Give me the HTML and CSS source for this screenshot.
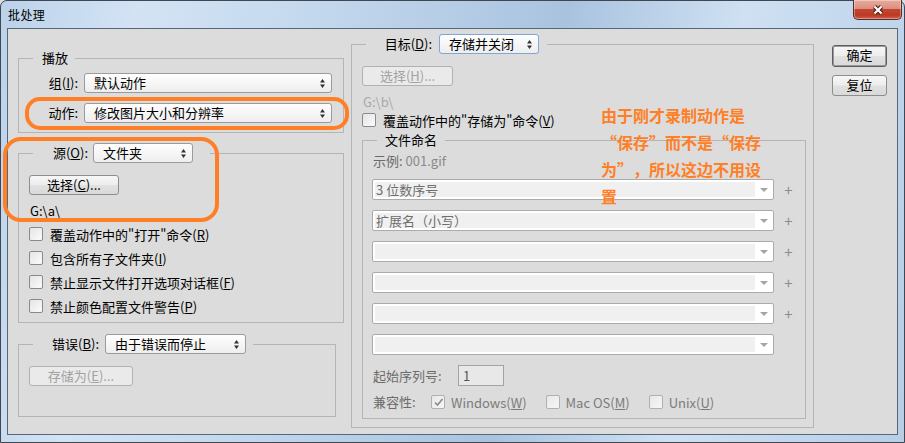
FILE: index.html
```html
<!DOCTYPE html>
<html lang="zh-CN">
<head>
    <meta charset="UTF-8">
    <title>批处理</title>
    <link rel="stylesheet" href="styles.css">
</head>
<body>
<div class="window">
    <div class="titlebar">
        <span class="title">批处理</span>
        <div class="close">
            <svg width="14" height="12" viewBox="0 0 14 12">
                <path d="M3.5 2.5L10.5 9.5M10.5 2.5L3.5 9.5" stroke="#4a1d18" stroke-width="4.4"/>
                <path d="M3.5 2.5L10.5 9.5M10.5 2.5L3.5 9.5" stroke="#fff" stroke-width="2.2"/>
            </svg>
        </div>
    </div>
    <div class="frame">
        <div class="client">
            <div class="left">
                <fieldset class="group play">
                    <legend class="lg-play">播放</legend>
                    <div class="body">
                        <div class="row">
                            <span class="lbl w59">组(<u>I</u>):</span>
                            <div class="select w248">默认动作<svg class="spin" width="5" height="9" viewBox="0 0 5 9"><path d="M2.5 0L5 3.5H0zM2.5 9L0 5.5H5z"/></svg></div>
                        </div>
                        <div class="row">
                            <span class="lbl w59">动作:</span>
                            <div class="select w248">修改图片大小和分辨率<svg class="spin" width="5" height="9" viewBox="0 0 5 9"><path d="M2.5 0L5 3.5H0zM2.5 9L0 5.5H5z"/></svg></div>
                        </div>
                    </div>
                </fieldset>

                <fieldset class="group source">
                    <legend class="lg-source">
                        <span class="lbl w51">源(<u>O</u>):</span>
                        <div class="select w100">文件夹<svg class="spin" width="5" height="9" viewBox="0 0 5 9"><path d="M2.5 0L5 3.5H0zM2.5 9L0 5.5H5z"/></svg></div>
                    </legend>
                    <div class="body">
                        <div class="btn w90">选择(<u>C</u>)...</div>
                        <div class="path">G:\a\</div>
                        <div class="checks">
                            <div class="check"><span class="cb"></span>覆盖动作中的"打开"命令(<u>R</u>)</div>
                            <div class="check"><span class="cb"></span>包含所有子文件夹(<u>I</u>)</div>
                            <div class="check"><span class="cb"></span>禁止显示文件打开选项对话框(<u>F</u>)</div>
                            <div class="check"><span class="cb"></span>禁止颜色配置文件警告(<u>P</u>)</div>
                        </div>
                    </div>
                </fieldset>

                <fieldset class="group errors">
                    <legend class="lg-errors">
                        <span class="lbl w62">错误(<u>B</u>):</span>
                        <div class="select w141">由于错误而停止<svg class="spin" width="5" height="9" viewBox="0 0 5 9"><path d="M2.5 0L5 3.5H0zM2.5 9L0 5.5H5z"/></svg></div>
                    </legend>
                    <div class="body">
                        <div class="btn disabled w104">存储为(<u>E</u>)...</div>
                    </div>
                </fieldset>
            </div>

            <fieldset class="group target">
                <legend class="lg-target">
                    <span class="lbl w62">目标(<u>D</u>):</span>
                    <div class="select w100 focus">存储并关闭<svg class="spin" width="5" height="9" viewBox="0 0 5 9"><path d="M2.5 0L5 3.5H0zM2.5 9L0 5.5H5z"/></svg></div>
                </legend>
                <div class="body">
                    <div class="btn disabled w91">选择(<u>H</u>)...</div>
                    <div class="path disabled-text">G:\b\</div>
                    <div class="check tall"><span class="cb"></span>覆盖动作中的"存储为"命令(<u>V</u>)</div>

                    <fieldset class="group naming">
                        <legend class="lg-naming">文件命名</legend>
                        <div class="body">
                            <div class="sample"><span class="sample-lbl">示例:</span> 001.gif</div>
                            <div class="combos">
                                <div class="combo-row"><div class="combo"><div class="field">3 位数序号</div><span class="drop"></span></div><span class="plus">+</span></div>
                                <div class="combo-row"><div class="combo"><div class="field">扩展名（小写）</div><span class="drop"></span></div><span class="plus">+</span></div>
                                <div class="combo-row"><div class="combo"><div class="field"></div><span class="drop"></span></div><span class="plus">+</span></div>
                                <div class="combo-row"><div class="combo"><div class="field"></div><span class="drop"></span></div><span class="plus">+</span></div>
                                <div class="combo-row"><div class="combo"><div class="field"></div><span class="drop"></span></div><span class="plus">+</span></div>
                                <div class="combo-row"><div class="combo"><div class="field"></div><span class="drop"></span></div></div>
                            </div>
                            <div class="start-row">
                                <span class="dim-lbl w85">起始序列号:</span>
                                <div class="num-input">1</div>
                            </div>
                            <div class="compat-row">
                                <span class="dim-lbl w58">兼容性:</span>
                                <span class="opt"><span class="cb off checked"><svg width="11" height="11" viewBox="0 0 11 11"><path d="M2 5.5L4.5 8L9.5 2" fill="none" stroke="#8a8a8a" stroke-width="1.6"/></svg></span>Windows(<u>W</u>)</span>
                                <span class="opt"><span class="cb off"></span>Mac OS(<u>M</u>)</span>
                                <span class="opt"><span class="cb off"></span>Unix(<u>U</u>)</span>
                            </div>
                        </div>
                    </fieldset>
                </div>
            </fieldset>

            <div class="buttons">
                <div class="btn default">确定</div>
                <div class="btn reset">复位</div>
            </div>
        </div>
    </div>

    <div class="mark mark-action"></div>
    <div class="mark mark-source"></div>
    <div class="note">由于刚才录制动作是<br><span class="ql">“</span>保存<span class="qr">”</span>而不是<span class="ql">“</span>保存<br>为<span class="qr">”</span>，所以这边不用设<br>置</div>
</div>
</body>
</html>
```

FILE: styles.css
```css
*{
    margin: 0;
    padding: 0;
    box-sizing: border-box;
}
body{
    width: 905px;
    height: 443px;
    overflow: hidden;
    background: #dcdcdc;
    font-family: "Noto Sans CJK SC", sans-serif;
    font-size: 13px;
    color: #000;
}
u{
    text-underline-offset: 1px;
}

/* window frame */
.window{
    position: relative;
    width: 905px;
    height: 443px;
    border: 1px solid #3f4752;
    border-radius: 7px 7px 0 0;
    background: linear-gradient(100deg, #bcd2ea 0%, #d3e3f4 14%, #c4d8ed 32%, #a9c3df 58%, #cfe0f2 76%, #b8cee7 100%);
    display: flex;
    flex-direction: column;
}
.titlebar{
    height: 27px;
    display: flex;
    justify-content: space-between;
    padding-left: 7px;
}
.title{
    font-size: 12px;
    line-height: 27px;
    letter-spacing: 0.4px;
}
.close{
    width: 49px;
    height: 20px;
    margin-top: -1px;
    margin-right: 2px;
    border: 1px solid #5a2a24;
    border-top: none;
    border-radius: 0 0 5px 5px;
    background: linear-gradient(#e9ab9d 0%, #d98f80 45%, #c4452f 50%, #bb3a25 80%, #d0604a 100%);
    box-shadow: inset 0 0 0 1px rgba(255,255,255,0.35);
    display: flex;
    align-items: center;
    justify-content: center;
}
.frame{
    flex: 1;
    padding: 0 6px 7px 6px;
    display: flex;
}
.client{
    flex: 1;
    border: 1px solid #56677a;
    background: #dcdcdc;
    display: flex;
    align-items: flex-start;
    padding-left: 10px;
}

/* group boxes */
.group{
    border: 1px solid #b5b5b5;
    min-width: 0;
}
.group legend{
    margin-left: 14px;
    line-height: 16px;
}
.group legend.lg-source,
.group legend.lg-errors,
.group legend.lg-target{
    display: flex;
    align-items: center;
    height: 20px;
}
.left{
    width: 326px;
    margin-top: 21px;
}
.play{
    width: 326px;
}
.lg-play{
    padding: 0 7px 0 9px;
}
.play .body{
    padding: 7px 10px 9px 0;
}
.row{
    display: flex;
    align-items: center;
    height: 20px;
}
.row + .row{
    margin-top: 10px;
}
.lbl{
    display: inline-block;
    text-align: right;
    line-height: 18px;
    white-space: nowrap;
}
.w51{ width: 51px; }
.w58{ width: 58px; }
.w59{ width: 59px; }
.w62{ width: 62px; }
.w85{ width: 85px; }
.w90{ width: 90px; }
.w91{ width: 91px; }
.w100{ width: 100px; }
.w104{ width: 104px; }
.w141{ width: 141px; }
.w248{ width: 248px; }

.source{
    width: 326px;
    margin-top: 10px;
}
.lg-source{
    padding: 0 17px 0 4px;
}
.lg-source .select{
    margin-left: 5px;
}
.source .body{
    padding: 12px 10px 4px 10px;
}
.errors{
    width: 318px;
    margin-top: 11px;
}
.lg-errors{
    padding: 0 7px 0 4px;
}
.lg-errors .select{
    margin-left: 6px;
}
.errors .body{
    padding: 12px 10px 30px 10px;
}
.row .select{
    margin-left: 6px;
}

/* dropdowns */
.select{
    display: flex;
    align-items: center;
    justify-content: space-between;
    height: 20px;
    padding: 0 6px 0 9px;
    border: 1px solid #9b9b9b;
    border-radius: 3px;
    background: linear-gradient(#fefefe, #eeeeee);
    line-height: 18px;
    white-space: nowrap;
}
.select.focus{
    border-color: #7ba8d9;
}
.spin{
    fill: #333;
    flex: none;
}

/* buttons */
.btn{
    height: 20px;
    border: 1px solid #8d8d8d;
    border-radius: 3px;
    background: linear-gradient(#f7f7f7 0%, #ededed 48%, #e1e1e1 52%, #d9d9d9 100%);
    text-align: center;
    line-height: 18px;
    white-space: nowrap;
}
.btn.disabled{
    border-color: #b1b1b1;
    background: #eaeaea;
    color: #a2a2a2;
}
.path{
    margin-top: 8px;
    line-height: 16px;
    padding-left: 1px;
}
.disabled-text{
    color: #a8a8a8;
}
.checks{
    margin-top: 3px;
}
.check{
    display: flex;
    align-items: center;
    height: 24px;
    white-space: nowrap;
}
.check.tall{
    height: 20px;
}
.cb{
    display: inline-flex;
    align-items: center;
    justify-content: center;
    width: 14px;
    height: 14px;
    margin-right: 7px;
    border: 1px solid #8a8a8a;
    border-radius: 2px;
    background: linear-gradient(135deg, #e4e4e4, #fbfbfb);
    flex: none;
}
.cb.off{
    border-color: #b0b0b0;
    background: linear-gradient(135deg, #e8e8e8, #f6f6f6);
    margin-right: 6px;
}

/* target panel */
.target{
    width: 463px;
    margin-left: 7px;
    margin-top: 5px;
}
.lg-target{
    padding: 0 8px 0 4px;
}
.lg-target .select{
    margin-left: 7px;
}
.target > .body{
    padding: 12px 7px 8px 10px;
}
.naming{
    width: 444px;
    margin-top: 2px;
}
.lg-naming{
    padding: 0 8px;
}
.naming .body{
    padding: 5px 0 7px 9px;
}
.sample{
    line-height: 16px;
    padding-left: 1px;
    color: #8a8a8a;
}
.sample-lbl{
    color: #6a6a6a;
}
.combos{
    margin-top: 10px;
}
.combo-row{
    display: flex;
    align-items: center;
    height: 21px;
}
.combo-row + .combo-row{
    margin-top: 10px;
}
.combo{
    display: flex;
    width: 402px;
    height: 21px;
    padding: 2px 0 2px 2px;
    border: 1px solid #ababab;
    border-radius: 2px;
    background: #fff;
}
.field{
    flex: 1;
    background: #f0f0f0;
    padding-left: 1px;
    line-height: 15px;
    color: #6e6e6e;
    white-space: nowrap;
}
.drop{
    width: 18px;
    position: relative;
}
.drop::after{
    content: "";
    position: absolute;
    left: 5px;
    top: 6px;
    border-left: 4px solid transparent;
    border-right: 4px solid transparent;
    border-top: 4px solid #a5a5a5;
}
.plus{
    width: 29px;
    text-align: center;
    font-size: 15px;
    line-height: 21px;
    color: #8c8c8c;
}
.start-row{
    display: flex;
    align-items: center;
    margin-top: 10px;
    padding-left: 1px;
}
.dim-lbl{
    display: inline-block;
    color: #6b6b6b;
    line-height: 18px;
    white-space: nowrap;
}
.num-input{
    width: 46px;
    height: 21px;
    border: 1px solid #a3a3a3;
    background: #e8e8e8;
    padding-left: 4px;
    line-height: 19px;
    color: #555;
}
.compat-row{
    display: flex;
    align-items: center;
    height: 18px;
    margin-top: 7px;
    padding-left: 1px;
    color: #7b7b7b;
}
.opt{
    display: flex;
    align-items: center;
    margin-right: 19px;
    white-space: nowrap;
}

/* right buttons */
.buttons{
    width: 55px;
    margin-left: 18px;
    margin-top: 16px;
}
.btn.default{
    height: 22px;
    line-height: 18px;
    border: 1px solid #5e5e5e;
    box-shadow: inset 0 0 0 1px #9a9a9a;
}
.btn.reset{
    height: 21px;
    margin-top: 8px;
}

/* orange annotations */
.mark{
    position: absolute;
    border: 4px solid #ff7f27;
}
.mark-action{
    left: 24px;
    top: 96px;
    width: 324px;
    height: 33px;
    border-radius: 15px;
}
.mark-source{
    left: 2px;
    top: 136px;
    width: 216px;
    height: 85px;
    border-radius: 18px;
}
.note{
    position: absolute;
    left: 600px;
    top: 101px;
    font-size: 16px;
    font-weight: bold;
    line-height: 27px;
    color: #ff7f27;
    white-space: nowrap;
}
.ql,
.qr{
    display: inline-block;
    width: 16px;
}
.ql{
    text-align: right;
}
.qr{
    text-align: left;
}
```
